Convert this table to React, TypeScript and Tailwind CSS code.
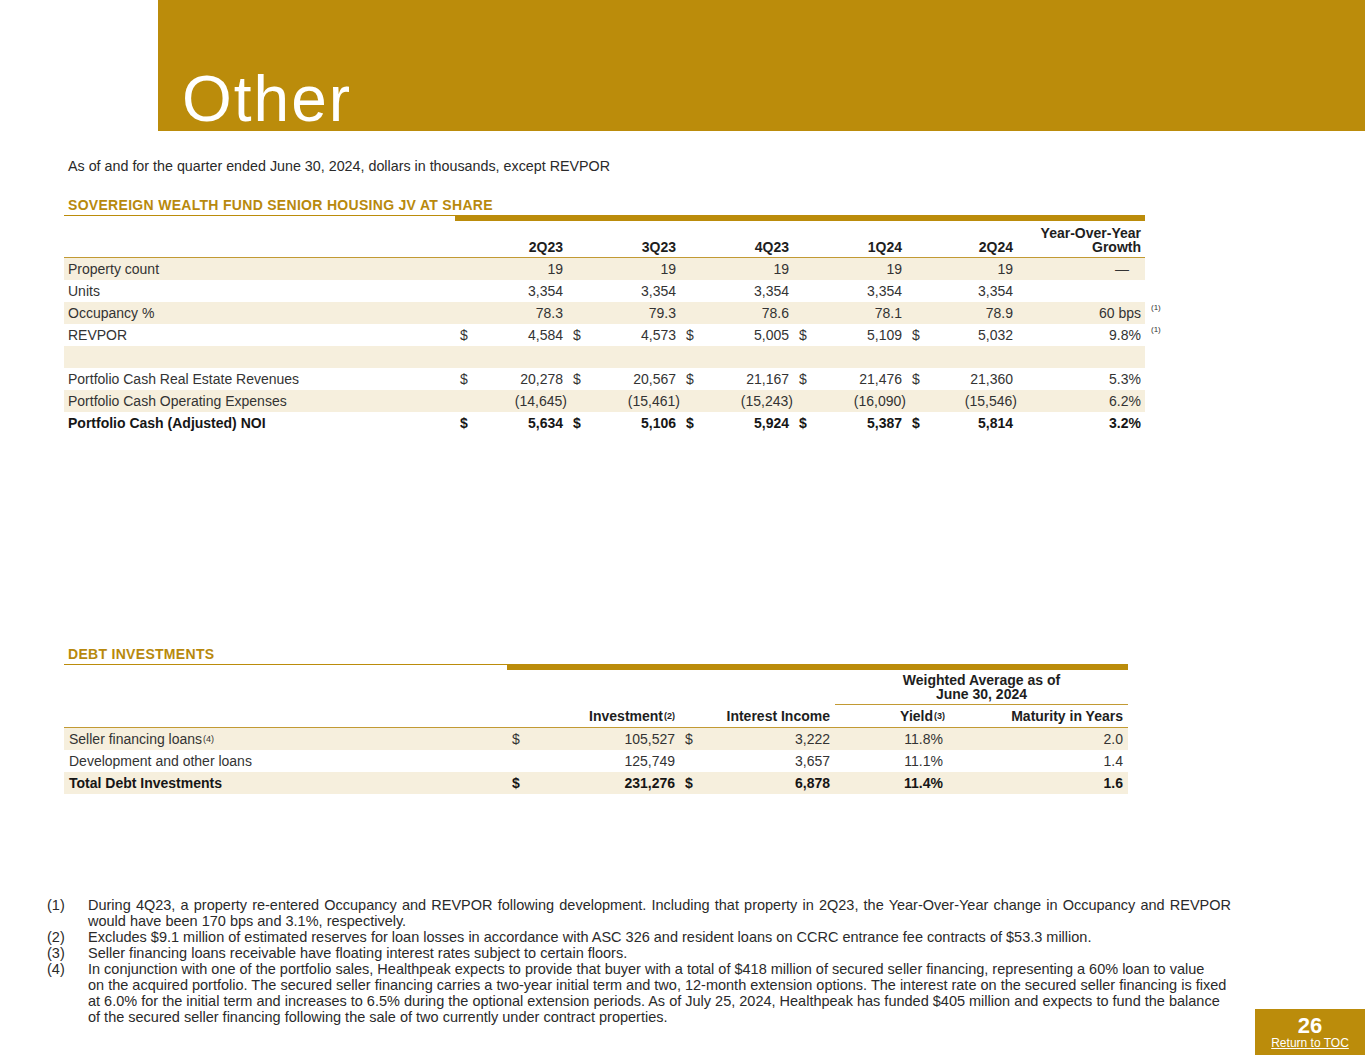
import React from "react";

const GOLD = "bg-[#bb8c0b]";

type Row = {
  label: string;
  vals: string[];
  dollar?: boolean;
  yoy?: string;
  note?: string;
  shade?: boolean;
  bold?: boolean;
  dash?: boolean;
};

const rows: Row[] = [
  { label: "Property count", vals: ["19", "19", "19", "19", "19"], yoy: "—", dash: true, shade: true },
  { label: "Units", vals: ["3,354", "3,354", "3,354", "3,354", "3,354"] },
  { label: "Occupancy %", vals: ["78.3", "79.3", "78.6", "78.1", "78.9"], yoy: "60 bps", note: "(1)", shade: true },
  { label: "REVPOR", vals: ["4,584", "4,573", "5,005", "5,109", "5,032"], dollar: true, yoy: "9.8%", note: "(1)" },
  { label: "", vals: ["", "", "", "", ""], shade: true },
  { label: "Portfolio Cash Real Estate Revenues", vals: ["20,278", "20,567", "21,167", "21,476", "21,360"], dollar: true, yoy: "5.3%" },
  { label: "Portfolio Cash Operating Expenses", vals: ["(14,645)", "(15,461)", "(15,243)", "(16,090)", "(15,546)"], yoy: "6.2%", shade: true },
  { label: "Portfolio Cash (Adjusted) NOI", vals: ["5,634", "5,106", "5,924", "5,387", "5,814"], dollar: true, yoy: "3.2%", bold: true },
];

function Val({ v }: { v: string }) {
  if (v.startsWith("(")) {
    return <span className="mr-[-4px]">{v}</span>;
  }
  return <span>{v}</span>;
}

function SectionTitle({ title, split }: { title: string; split: string }) {
  return (
    <div>
      <div className="pl-[4px] text-[14px] leading-[16px] font-bold text-[#b8890d] tracking-[0.3px]">{title}</div>
      <div className="flex items-start mt-[2px]">
        <div className={`h-px ${GOLD} ${split}`} />
        <div className={`h-[6px] flex-1 ${GOLD}`} />
      </div>
    </div>
  );
}

function Table1() {
  return (
    <div className="w-[1081px]">
      <SectionTitle title="SOVEREIGN WEALTH FUND SENIOR HOUSING JV AT SHARE" split="w-[391px]" />
      <div className="grid grid-cols-[391px_113px_113px_113px_113px_111px_127px] h-[37px] items-end border-b border-[#c29a33] pb-[3px] font-bold text-[14px] leading-[14px] text-[#1e1e1e]">
        <div />
        {["2Q23", "3Q23", "4Q23", "1Q24", "2Q24"].map((q) => (
          <div key={q} className="text-right pr-[5px]">
            {q}
          </div>
        ))}
        <div className="text-right pr-[4px]">
          Year-Over-Year
          <br />
          Growth
        </div>
      </div>
      {rows.map((r, i) => (
        <div
          key={i}
          className={`grid grid-cols-[391px_113px_113px_113px_113px_111px_127px] h-[22px] items-center text-[14px] leading-[22px] ${
            r.shade ? "bg-[#f6efdd]" : ""
          } ${r.bold ? "font-bold text-[#161616]" : "text-[#333333]"}`}
        >
          <div className="pl-[4px] whitespace-nowrap">{r.label}</div>
          {r.vals.map((v, j) => (
            <div key={j} className="flex justify-between px-[5px]">
              <span>{r.dollar ? "$" : ""}</span>
              <Val v={v} />
            </div>
          ))}
          <div className={`relative text-right ${r.dash ? "pr-[16px]" : "pr-[4px]"}`}>
            {r.yoy}
            {r.note && (
              <span className="absolute left-[133px] top-[-5px] text-[8px] font-normal text-[#333]">{r.note}</span>
            )}
          </div>
        </div>
      ))}
    </div>
  );
}

type Row2 = { label: React.ReactNode; inv: string; int: string; y: string; m: string; dollar?: boolean; shade?: boolean; bold?: boolean };

const rows2: Row2[] = [
  {
    label: (
      <>
        Seller financing loans<sup className="text-[9px] relative top-[-2px] ml-[1px]">(4)</sup>
      </>
    ),
    inv: "105,527",
    int: "3,222",
    y: "11.8%",
    m: "2.0",
    dollar: true,
    shade: true,
  },
  { label: "Development and other loans", inv: "125,749", int: "3,657", y: "11.1%", m: "1.4" },
  { label: "Total Debt Investments", inv: "231,276", int: "6,878", y: "11.4%", m: "1.6", dollar: true, shade: true, bold: true },
];

function Table2() {
  const cols = "grid grid-cols-[443px_173px_155px_113px_180px]";
  return (
    <div className="w-[1064px]">
      <SectionTitle title="DEBT INVESTMENTS" split="w-[443px]" />
      <div className={`${cols} h-[35px] items-end font-bold text-[14px] text-[#1e1e1e]`}>
        <div />
        <div />
        <div />
        <div className="col-span-2 h-full border-b border-[#c29a33] flex items-end justify-center text-center leading-[14px] pb-[3px]">
          <div>
            Weighted Average as of
            <br />
            June 30, 2024
          </div>
        </div>
      </div>
      <div className={`${cols} h-[23px] items-center border-b border-[#c29a33] font-bold text-[14px] leading-[22px] text-[#1e1e1e]`}>
        <div />
        <div className="text-right pr-[5px]">
          Investment<sup className="text-[9px] relative top-[-2px] ml-[1px]">(2)</sup>
        </div>
        <div className="text-right pr-[5px]">Interest Income</div>
        <div className="text-right pr-[3px]">
          Yield<sup className="text-[9px] relative top-[-2px] ml-[1px]">(3)</sup>
        </div>
        <div className="text-right pr-[5px]">Maturity in Years</div>
      </div>
      {rows2.map((r, i) => (
        <div
          key={i}
          className={`${cols} h-[22px] items-center text-[14px] leading-[22px] ${r.shade ? "bg-[#f6efdd]" : ""} ${
            r.bold ? "font-bold text-[#161616]" : "text-[#333333]"
          }`}
        >
          <div className="pl-[5px] whitespace-nowrap">{r.label}</div>
          <div className="flex justify-between px-[5px]">
            <span>{r.dollar ? "$" : ""}</span>
            <span>{r.inv}</span>
          </div>
          <div className="flex justify-between px-[5px]">
            <span>{r.dollar ? "$" : ""}</span>
            <span>{r.int}</span>
          </div>
          <div className="text-right pr-[5px]">{r.y}</div>
          <div className="text-right pr-[5px]">{r.m}</div>
        </div>
      ))}
    </div>
  );
}

function Footnotes() {
  return (
    <div className="w-[1184px] text-[14.5px] leading-[16px] text-[#2a2a2a]">
      <div className="flex">
        <div className="w-[41px] shrink-0">(1)</div>
        <div className="flex-1">
          <div className="text-justify [text-align-last:justify] whitespace-nowrap">
            During 4Q23, a property re-entered Occupancy and REVPOR following development. Including that property in 2Q23, the Year-Over-Year change in Occupancy and REVPOR
          </div>
          <div>would have been 170 bps and 3.1%, respectively.</div>
        </div>
      </div>
      <div className="flex">
        <div className="w-[41px] shrink-0">(2)</div>
        <div className="flex-1 whitespace-nowrap">
          Excludes $9.1 million of estimated reserves for loan losses in accordance with ASC 326 and resident loans on CCRC entrance fee contracts of $53.3 million.
        </div>
      </div>
      <div className="flex">
        <div className="w-[41px] shrink-0">(3)</div>
        <div className="flex-1 whitespace-nowrap">Seller financing loans receivable have floating interest rates subject to certain floors.</div>
      </div>
      <div className="flex">
        <div className="w-[41px] shrink-0">(4)</div>
        <div className="flex-1 whitespace-nowrap">
          <div>
            In conjunction with one of the portfolio sales, Healthpeak expects to provide that buyer with a total of $418 million of secured seller financing, representing a 60% loan to value
          </div>
          <div>
            on the acquired portfolio. The secured seller financing carries a two-year initial term and two, 12-month extension options. The interest rate on the secured seller financing is fixed
          </div>
          <div>
            at 6.0% for the initial term and increases to 6.5% during the optional extension periods. As of July 25, 2024, Healthpeak has funded $405 million and expects to fund the balance
          </div>
          <div>of the secured seller financing following the sale of two currently under contract properties.</div>
        </div>
      </div>
    </div>
  );
}

export default function App() {
  return (
    <div
      className="relative w-[1365px] h-[1055px] overflow-hidden bg-white"
      style={{ fontFamily: '"Liberation Sans", Arial, sans-serif' }}
    >
      <div className="flex">
        <div className="w-[158px] shrink-0" />
        <div className={`flex-1 h-[131px] ${GOLD} pl-[24px] pt-[67px]`}>
          <div className="text-white text-[64px] leading-[64px] tracking-[2px]">Other</div>
        </div>
      </div>
      <div className="pl-[64px]">
        <div className="mt-[27px] pl-[4px] text-[14.3px] leading-[16px] text-[#2a2a2a]">
          As of and for the quarter ended June 30, 2024, dollars in thousands, except REVPOR
        </div>
        <div className="mt-[23px]">
          <Table1 />
        </div>
        <div className="mt-[212px]">
          <Table2 />
        </div>
      </div>
      <div className="pl-[47px] mt-[103px]">
        <Footnotes />
      </div>
      <div className={`absolute right-0 bottom-0 w-[110px] h-[46px] ${GOLD} flex flex-col items-center justify-center text-white`}>
        <div className="text-[22px] leading-[20px] font-bold mt-[2px]">26</div>
        <div className="text-[12px] leading-[14px] underline">Return to TOC</div>
      </div>
    </div>
  );
}
